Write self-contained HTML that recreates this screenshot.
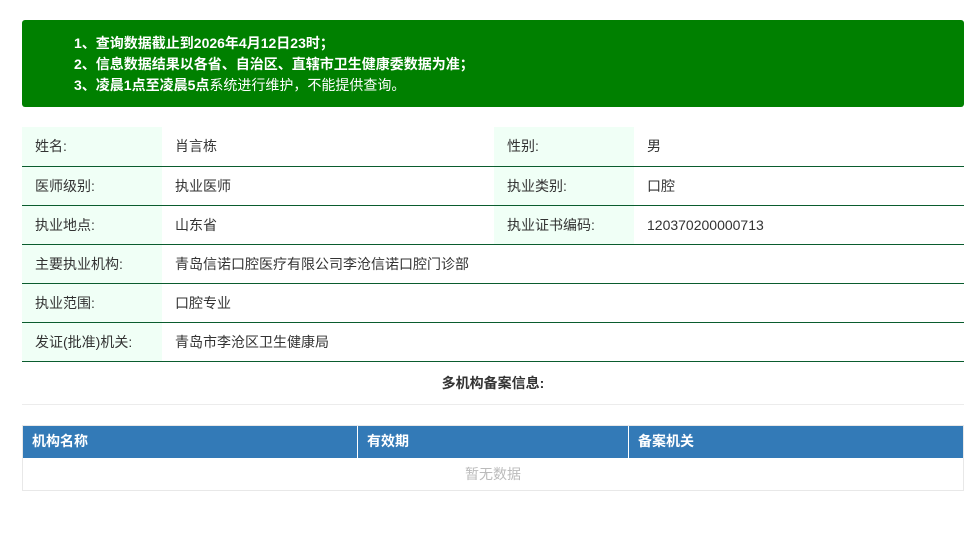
<!DOCTYPE html>
<html><head><meta charset="utf-8"><style>
body{margin:0;background:#fff;font-family:"Liberation Sans","Noto Sans CJK SC",sans-serif;font-size:14px;color:#333}
.ban{position:absolute;left:22px;top:20px;width:942px;height:87px;background:#008000;border-radius:3px;color:#fff;font-weight:bold}
.ban div{position:absolute;left:52px;line-height:21px}
table.info{position:absolute;left:22px;top:127px;width:942px;border-collapse:collapse}
.info td{height:39px;border-bottom:1px solid #0a5c2e;padding:0 0 0 13px;vertical-align:middle;box-sizing:border-box}
.info td.l{background:#f0fff6;width:140px}
.title{position:absolute;left:22px;top:372px;width:942px;text-align:center;font-weight:bold;line-height:22px}
.hr{position:absolute;left:22px;top:404px;width:942px;height:1px;background:#ececec}
.t2{position:absolute;left:22px;top:425px;width:942px;height:66px;border:1px solid #e8e8e8;box-sizing:border-box}
.hd{position:absolute;top:426px;height:32px;background:#337ab7;color:#fff;font-weight:bold;line-height:31px;padding-left:9px;box-sizing:border-box}
.empty{position:absolute;left:22px;top:458px;width:942px;line-height:33px;text-align:center;color:#bbb}
</style></head><body>
<div class="ban">
<div style="top:13px">1、查询数据截止到2026年4月12日23时；</div>
<div style="top:34px">2、信息数据结果以各省、自治区、直辖市卫生健康委数据为准；</div>
<div style="top:55px">3、凌晨1点至凌晨5点<span style="font-weight:normal">系统进行维护，不能提供查询。</span></div>
</div>
<table class="info">
<tr><td class="l">姓名:</td><td style="width:332px">肖言栋</td><td class="l">性别:</td><td>男</td></tr>
<tr><td class="l">医师级别:</td><td>执业医师</td><td class="l">执业类别:</td><td>口腔</td></tr>
<tr><td class="l">执业地点:</td><td>山东省</td><td class="l">执业证书编码:</td><td>120370200000713</td></tr>
<tr><td class="l">主要执业机构:</td><td colspan="3">青岛信诺口腔医疗有限公司李沧信诺口腔门诊部</td></tr>
<tr><td class="l">执业范围:</td><td colspan="3">口腔专业</td></tr>
<tr><td class="l">发证(批准)机关:</td><td colspan="3">青岛市李沧区卫生健康局</td></tr>
</table>
<div class="title">多机构备案信息:</div>
<div class="hr"></div>
<div class="t2"></div>
<div class="hd" style="left:23px;width:334px">机构名称</div>
<div class="hd" style="left:358px;width:270px">有效期</div>
<div class="hd" style="left:629px;width:334px">备案机关</div>
<div class="empty">暂无数据</div>
</body></html>
